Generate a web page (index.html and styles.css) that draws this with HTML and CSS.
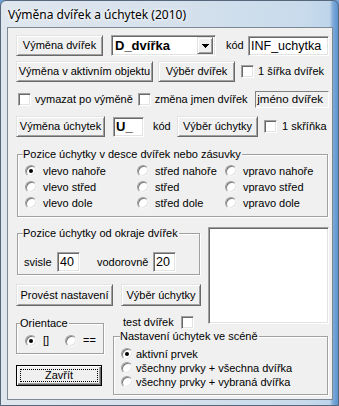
FILE: index.html
```html
<!DOCTYPE html>
<html lang="cs">
<head>
<meta charset="utf-8">
<title>Výměna dvířek a úchytek (2010)</title>
<link rel="stylesheet" href="styles.css">
</head>
<body>
<div class="window">
  <div class="titlebar"><span class="title">Výměna dvířek a úchytek (2010)</span></div>
  <div class="client">
    <div class="row r1">
      <button class="btn b-dv">Výměna dvířek</button>
      <div class="field combo">
        <span class="combo-text">D_dvířka</span>
        <span class="combo-btn"><svg width="7" height="4" viewBox="0 0 7 4" shape-rendering="crispEdges"><path d="M0 0h7v1h-1v1h-1v1h-1v1h-1v-1h-1v-1h-1v-1h-1z" fill="#000"/></svg></span>
      </div>
      <span class="lbl kod1">kód</span>
      <div class="field inp-inf">INF_uchytka</div>
    </div>

    <div class="row r2">
      <button class="btn b-aktiv">Výměna v aktivním objektu</button>
      <button class="btn b-vdv">Výběr dvířek</button>
      <span class="chk c-sirka"></span><span class="lbl cl">1 šířka dvířek</span>
    </div>

    <div class="row r3">
      <span class="chk c-vym"></span><span class="lbl cl w-vym">vymazat po výměně</span>
      <span class="chk"></span><span class="lbl cl w-zm">změna jmen dvířek</span>
      <div class="static">jméno dvířek</div>
    </div>

    <div class="row r4">
      <button class="btn b-uch">Výměna úchytek</button>
      <div class="field inp-u">U_</div>
      <span class="lbl kod2">kód</span>
      <button class="btn b-vuch">Výběr úchytky</button>
      <span class="chk c-skr"></span><span class="lbl cl2">1 skříňka</span>
    </div>

    <div class="group g1">
      <span class="gtitle">Pozice úchytky v desce dvířek nebo zásuvky</span>
      <div class="rgrid">
        <label class="ropt"><span class="radio on"></span>vlevo nahoře</label>
        <label class="ropt"><span class="radio"></span>střed nahoře</label>
        <label class="ropt"><span class="radio"></span>vpravo nahoře</label>
        <label class="ropt"><span class="radio"></span>vlevo střed</label>
        <label class="ropt"><span class="radio"></span>střed</label>
        <label class="ropt"><span class="radio"></span>vpravo střed</label>
        <label class="ropt"><span class="radio"></span>vlevo dole</label>
        <label class="ropt"><span class="radio"></span>střed dole</label>
        <label class="ropt"><span class="radio"></span>vpravo dole</label>
      </div>
    </div>

    <div class="bottom">
      <div class="group g2">
        <span class="gtitle">Pozice úchytky od okraje dvířek</span>
        <div class="g2row">
          <span class="lbl l-svisle">svisle</span>
          <div class="field inp-num">40</div>
          <span class="lbl l-vod">vodorovně</span>
          <div class="field inp-num">20</div>
        </div>
      </div>

      <div class="field listbox"></div>

      <div class="btnrow">
        <button class="btn b-prov">Provést nastavení</button>
        <button class="btn b-vuch2">Výběr úchytky</button>
      </div>

      <div class="orient">
        <div class="group g-or">
          <span class="gtitle gt-or">Orientace</span>
          <div class="orrow">
            <label class="ropt o1"><span class="radio on"></span>[]</label>
            <label class="ropt"><span class="radio"></span>==</label>
          </div>
        </div>
        <button class="btn btn-default"><span class="focus">Zavřít</span></button>
      </div>

      <div class="test">
        <span class="lbl l-test">test dvířek</span><span class="chk"></span>
      </div>

      <div class="group g3">
        <span class="gtitle gt3">Nastavení úchytek ve scéně</span>
        <div class="g3list">
          <label class="ropt"><span class="radio on"></span>aktivní prvek</label>
          <label class="ropt"><span class="radio"></span>všechny prvky + všechna dvířka</label>
          <label class="ropt"><span class="radio"></span>všechny prvky + vybraná dvířka</label>
        </div>
      </div>
    </div>
  </div>
</div>
</body>
</html>
```

FILE: styles.css
```css
html, body {
  margin: 0;
  padding: 0;
}

body {
  width: 339px;
  height: 406px;
  overflow: hidden;
  background: #6f9fd2;
  font-family: "Liberation Sans", Arial, sans-serif;
  font-size: 11px;
  color: #000;
}

.window {
  box-sizing: border-box;
  width: 339px;
  height: 406px;
  border: 1px solid #56677c;
  border-radius: 6px 6px 0 0;
  background: linear-gradient(90deg, #dfe6ee 0%, #d6e1ec 50%, #c8dbec 90%, #bdd4ea 97.5%, #7eaad8 98.5%, #5b92cf 100%);
  display: flex;
  flex-direction: column;
}

.titlebar {
  height: 26px;
  padding-left: 7px;
  display: flex;
  align-items: center;
}

.title {
  font-family: "Noto Sans", "Open Sans", sans-serif;
  font-size: 12px;
  color: #000;
  text-shadow: 0 0 5px #fff, 0 0 3px #fff;
}

.client {
  box-sizing: border-box;
  margin-left: 6px;
  width: 326px;
  height: 373px;
  border: 1px solid #7c8894;
  background: #f0f0f0;
  padding: 7px 3px 0 8px;
}

.row {
  display: flex;
  align-items: center;
}

.r1 { height: 21px; }
.r2 { height: 21px; margin-top: 5px; }
.r3 { height: 17px; margin-top: 9px; }
.r4 { height: 21px; margin-top: 8px; }

.lbl {
  white-space: nowrap;
  line-height: 13px;
}

/* raised push button */
.btn {
  -webkit-appearance: none;
  appearance: none;
  box-sizing: border-box;
  height: 21px;
  margin: 0;
  padding: 0;
  font: inherit;
  color: #000;
  background: #f0f0f0;
  border: 1px solid;
  border-color: #e3e3e3 #696969 #696969 #e3e3e3;
  box-shadow: inset 1px 1px 0 #fff, inset -1px -1px 0 #a0a0a0;
  text-align: center;
  white-space: nowrap;
  line-height: 13px;
}

/* sunken field */
.field {
  box-sizing: border-box;
  background: #fff;
  border: 1px solid;
  border-color: #a0a0a0 #fff #fff #a0a0a0;
  box-shadow: inset 1px 1px 0 #696969, inset -1px -1px 0 #e3e3e3;
  display: flex;
  align-items: center;
  white-space: nowrap;
}

.chk {
  box-sizing: border-box;
  width: 13px;
  height: 13px;
  flex: none;
  background: #fff;
  border: 1px solid;
  border-color: #a0a0a0 #fff #fff #a0a0a0;
  box-shadow: inset 1px 1px 0 #696969, inset -1px -1px 0 #e3e3e3;
}

/* row 1 */
.b-dv { width: 87px; }
.combo {
  width: 105px;
  height: 21px;
  margin-left: 8px;
  padding: 0 2px 0 2px;
}
.combo-text {
  font-weight: bold;
  font-size: 13px;
  padding-left: 1px;
}
.combo-btn {
  box-sizing: border-box;
  margin-left: auto;
  width: 16px;
  height: 17px;
  background: #f0f0f0;
  border: 1px solid;
  border-color: #e3e3e3 #696969 #696969 #e3e3e3;
  box-shadow: inset 1px 1px 0 #fff, inset -1px -1px 0 #a0a0a0;
  display: flex;
  align-items: center;
  justify-content: center;
}
.combo-btn svg { display: block; margin-top: 1px; }
.kod1 { width: 22px; margin-left: 10px; }
.inp-inf {
  width: 81px;
  height: 20px;
  font-size: 12.5px;
  padding-left: 2px;
}

/* row 2 */
.b-aktiv { width: 137px; }
.b-vdv { width: 77px; margin-left: 5px; }
.c-sirka { margin-left: 6px; }
.cl { margin-left: 4px; }

/* row 3 */
.c-vym { margin-left: 2px; }
.w-vym { width: 103px; }
.w-zm { width: 101px; }
.static {
  box-sizing: border-box;
  width: 74px;
  height: 17px;
  border: 1px solid;
  border-color: #808080 #fff #fff #808080;
  padding-left: 1px;
  font-size: 11.5px;
  line-height: 15px;
  white-space: nowrap;
  overflow: hidden;
}

/* row 4 */
.b-uch { width: 89px; }
.inp-u {
  width: 31px;
  height: 20px;
  margin-left: 8px;
  padding-left: 2px;
  font-weight: bold;
  font-size: 13px;
}
.kod2 { width: 24px; margin-left: 9px; }
.b-vuch { width: 81px; }
.c-skr { margin-left: 6px; }
.cl2 { margin-left: 5px; }

/* group boxes */
.group {
  box-sizing: border-box;
  position: relative;
  border: 1px solid #a0a0a0;
  box-shadow: 1px 1px 0 #fff, inset 1px 1px 0 #fff;
}
.gtitle {
  position: absolute;
  top: -7px;
  left: 5px;
  background: #f0f0f0;
  padding-right: 1px;
  line-height: 13px;
  white-space: nowrap;
}

.g1 {
  width: 311px;
  height: 63px;
  margin: 17px 0 0 1px;
}
.rgrid {
  display: grid;
  grid-template-columns: 112px 88px 1fr;
  grid-auto-rows: 16px;
  padding: 8px 0 0 7px;
}

.ropt {
  display: flex;
  align-items: center;
  white-space: nowrap;
  line-height: 13px;
}
.radio {
  box-sizing: border-box;
  width: 12px;
  height: 12px;
  flex: none;
  border-radius: 50%;
  background: #fff;
  border: 1px solid;
  border-color: #a0a0a0 #f4f4f4 #f4f4f4 #a0a0a0;
  box-shadow: inset 1px 1px 0 #7a7a7a, inset -1px -1px 0 #e3e3e3;
  margin-right: 6px;
  display: grid;
  place-items: center;
}
.radio.on::after {
  content: "";
  width: 4px;
  height: 4px;
  border-radius: 50%;
  background: #000;
}

/* bottom part */
.bottom {
  display: grid;
  grid-template-columns: 88px 9px 95px 121px;
  grid-template-rows: 57px 23px 29px 62px;
  margin-top: 10px;
}

.g2 {
  grid-column: 1 / 4;
  grid-row: 1;
  align-self: start;
  width: 183px;
  height: 42px;
  margin: 6px 0 0 1px;
}
.g2row {
  display: flex;
  align-items: center;
  padding: 18px 0 0 6px;
}
.l-svisle { width: 33px; }
.l-vod { width: 56px; margin-left: 17px; }
.inp-num {
  width: 23px;
  height: 20px;
  padding-left: 2px;
  font-size: 12.5px;
}

.listbox {
  grid-column: 4;
  grid-row: 1 / 4;
  align-self: start;
  width: 121px;
  height: 97px;
}

.btnrow {
  grid-column: 1 / 4;
  grid-row: 2;
  display: flex;
  gap: 8px;
  align-items: flex-start;
}
.btnrow .btn { height: 22px; }
.b-prov { width: 97px; }
.b-vuch2 { width: 80px; }

.orient {
  grid-column: 1;
  grid-row: 3 / 5;
  padding-top: 16px;
  display: flex;
  flex-direction: column;
  align-items: flex-start;
}
.g-or {
  width: 88px;
  height: 31px;
}
.gt-or { left: 3px; }
.orrow {
  display: flex;
  padding: 10px 0 0 8px;
}
.o1 { width: 40px; }

.btn-default {
  width: 86px;
  height: 21px;
  margin-top: 11px;
  border: 1px solid #000;
  box-shadow: inset 1px 1px 0 #fff, inset -1px -1px 0 #696969, inset -2px -2px 0 #a0a0a0;
  padding: 3px 3px;
  display: flex;
}
.focus {
  flex: 1;
  border: 1px dotted #000;
  line-height: 11px;
  text-align: center;
}

.test {
  grid-column: 3;
  grid-row: 3;
  display: flex;
  align-items: center;
  padding: 9px 0 0 10px;
  align-self: start;
}
.l-test { width: 58px; }

.g3 {
  grid-column: 3 / 5;
  grid-row: 4;
  align-self: start;
  width: 215px;
  height: 59px;
}
.gt3 { left: 6px; }
.g3list {
  display: grid;
  grid-auto-rows: 14px;
  padding: 10px 0 0 7px;
}
.g3list .radio { margin-right: 3px; }
```
